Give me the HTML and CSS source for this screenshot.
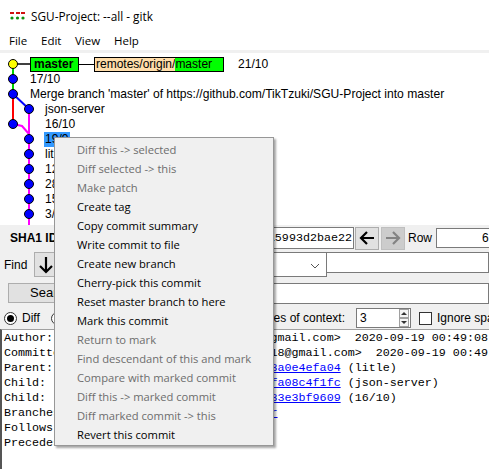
FILE: index.html
```html
<!DOCTYPE html>
<html>
<head>
<meta charset="utf-8">
<title>gitk</title>
<link rel="stylesheet" href="styles.css">
</head>
<body>
<div class="win">
  <div class="titlebar">
    <svg class="appicon" width="16" height="9" viewBox="0 0 16 9">
      <rect x="0" y="0" width="4" height="2" fill="#d01010"/>
      <rect x="6" y="0" width="4" height="2" fill="#d01010"/>
      <rect x="11" y="0" width="4" height="2" fill="#d01010"/>
      <circle cx="2" cy="6" r="1.6" fill="#109010"/>
      <circle cx="7.5" cy="6" r="1.6" fill="#109010"/>
      <circle cx="13" cy="6" r="1.6" fill="#109010"/>
    </svg>
    <span class="title">SGU-Project: --all - gitk</span>
  </div>
  <div class="menubar">
    <span class="mi mi-file">File</span>
    <span class="mi mi-edit">Edit</span>
    <span class="mi mi-view">View</span>
    <span class="mi">Help</span>
  </div>
  <div class="sep"></div>

  <div class="graph">
    <svg class="lines" width="60" height="172" viewBox="0 0 60 172">
      <line x1="13" y1="11" x2="30" y2="11" stroke="#000" stroke-width="1.5"/>
      <line x1="13" y1="11" x2="13" y2="41" stroke="#00d000" stroke-width="2"/>
      <line x1="13" y1="41" x2="13" y2="71" stroke="#ff0000" stroke-width="2"/>
      <line x1="13" y1="41" x2="29" y2="56" stroke="#0000ff" stroke-width="2"/>
      <line x1="29" y1="56" x2="29" y2="172" stroke="#ff00ff" stroke-width="2"/>
      <polyline points="13,71 22,73 29,81" fill="none" stroke="#ff00ff" stroke-width="2"/>
      <circle cx="13" cy="11" r="4.5" fill="#ffff00" stroke="#000" stroke-width="1"/>
      <circle cx="13" cy="26" r="4.5" fill="#0000ff" stroke="#000" stroke-width="1"/>
      <circle cx="13" cy="41" r="4.5" fill="#0000ff" stroke="#000" stroke-width="1"/>
      <circle cx="29" cy="56" r="4.5" fill="#0000ff" stroke="#000" stroke-width="1"/>
      <circle cx="13" cy="71" r="4.5" fill="#0000ff" stroke="#000" stroke-width="1"/>
      <circle cx="29" cy="86" r="4.5" fill="#0000ff" stroke="#000" stroke-width="1"/>
      <circle cx="29" cy="101" r="4.5" fill="#0000ff" stroke="#000" stroke-width="1"/>
      <circle cx="29" cy="116" r="4.5" fill="#0000ff" stroke="#000" stroke-width="1"/>
      <circle cx="29" cy="131" r="4.5" fill="#0000ff" stroke="#000" stroke-width="1"/>
      <circle cx="29" cy="146" r="4.5" fill="#0000ff" stroke="#000" stroke-width="1"/>
      <circle cx="29" cy="161" r="4.5" fill="#0000ff" stroke="#000" stroke-width="1"/>
    </svg>
    <div class="row ind0">
      <span class="ref ref-local">master</span><span class="conn"></span><span class="ref ref-remote"><span class="rp">remotes/origin/</span><span class="rh">master</span></span><span class="after-ref">21/10</span>
    </div>
    <div class="row ind0">17/10</div>
    <div class="row ind0">Merge branch 'master' of https://github.com/TikTzuki/SGU-Project into master</div>
    <div class="row ind1">json-server</div>
    <div class="row ind1">16/10</div>
    <div class="row ind1"><span class="sel">19/9</span></div>
    <div class="row ind1">litle</div>
    <div class="row ind1">12/9</div>
    <div class="row ind1">28/8</div>
    <div class="row ind1">15/8</div>
    <div class="row ind1">3/8</div>
  </div>

  <div class="lower">
    <div class="sha-row">
      <span class="sha-label">SHA1 ID:</span>
      <span class="sha-entry"><span>a7c41e2f0b9d83e6f1c0524d7be8a5993d2bae22</span></span>
      <span class="abtn">
        <svg width="22" height="20" viewBox="0 0 22 20"><path d="M5 10 H18 M11 4 L5 10 L11 16" fill="none" stroke="#000" stroke-width="2.2"/></svg>
      </span>
      <span class="abtn abtn-dis">
        <svg width="22" height="20" viewBox="0 0 22 20"><path d="M4 10 H17 M11 4 L17 10 L11 16" fill="none" stroke="#838383" stroke-width="2.2"/></svg>
      </span>
      <span class="row-label">Row</span>
      <span class="row-entry">6</span>
    </div>

    <div class="find-row">
      <div class="find-left">
        <span class="find-label">Find</span>
        <span class="fbtn">
          <svg width="22" height="22" viewBox="0 0 22 22"><path d="M11 3 V18 M5 12 L11 18 L17 12" fill="none" stroke="#000" stroke-width="2.2"/></svg>
        </span>
        <span class="fbtn">
          <svg width="22" height="22" viewBox="0 0 22 22"><path d="M11 19 V4 M5 10 L11 4 L17 10" fill="none" stroke="#000" stroke-width="2.2"/></svg>
        </span>
        <span class="find-commit">commit</span>
        <span class="combo">containing:
          <svg class="chev" width="10" height="6" viewBox="0 0 10 6"><path d="M1 1 L5 5 L9 1" fill="none" stroke="#555" stroke-width="1"/></svg>
        </span>
      </div>
      <span class="find-entry"></span>
    </div>

    <div class="search-row">
      <span class="sbtn">Search</span>
      <span class="search-entry"></span>
    </div>

    <div class="opts-row">
      <div class="opts-left">
        <div class="radios">
          <span class="radio on"></span><span class="rlabel">Diff</span>
          <span class="radio"></span><span class="rlabel">Old version</span>
          <span class="radio"></span><span class="rlabel">New version</span>
        </div>
        <span class="ctx-label">Lines of context:</span>
      </div>
      <span class="spin"><span class="spin-val">3</span><span class="spin-arrows"><span class="sa sa-up"></span><span class="sa sa-down"></span></span></span>
      <span class="check"></span>
      <span class="clabel">Ignore space change</span>
    </div>

    <div class="textarea">
      <div class="tl">Author: TikTzuki &lt;tiktzuki.nguyen2018@gmail.com&gt;  2020-09-19 00:49:08</div>
      <div class="tl">Committer: TikTzuki &lt;tiktzuki.nguyen2018@gmail.com&gt;  2020-09-19 00:49:08</div>
      <div class="tl">Parent: <span class="lnk">e1f93b07c2d54a6e98b1c07d4f52a63a0e4efa04</span> (litle)</div>
      <div class="tl">Child:  <span class="lnk">b4c8e2d1a07f36c95e2b8d40a1c73ffa08c4f1fc</span> (json-server)</div>
      <div class="tl">Child:  <span class="lnk">7d2e91c4b0a85f3e6c17d9b2e04a5d33e3bf9609</span> (16/10)</div>
      <div class="tl">Branches: <span class="lnk">master</span>, <span class="lnk">remotes/origin/master</span></div>
      <div class="tl">Follows: </div>
      <div class="tl">Precedes: </div>
    </div>
  </div>

  <div class="ctxmenu">
    <div class="it dis">Diff this -&gt; selected</div>
    <div class="it dis">Diff selected -&gt; this</div>
    <div class="it dis">Make patch</div>
    <div class="it">Create tag</div>
    <div class="it">Copy commit summary</div>
    <div class="it">Write commit to file</div>
    <div class="it">Create new branch</div>
    <div class="it">Cherry-pick this commit</div>
    <div class="it">Reset master branch to here</div>
    <div class="it">Mark this commit</div>
    <div class="it dis">Return to mark</div>
    <div class="it dis">Find descendant of this and mark</div>
    <div class="it dis">Compare with marked commit</div>
    <div class="it dis">Diff this -&gt; marked commit</div>
    <div class="it dis">Diff marked commit -&gt; this</div>
    <div class="it">Revert this commit</div>
  </div>
</div>
</body>
</html>
```

FILE: styles.css
```css
* { box-sizing: border-box; }
html, body { margin: 0; padding: 0; }
body {
  width: 489px;
  height: 469px;
  overflow: hidden;
  background: #f0f0f0;
  font-family: "Liberation Sans", Arial, sans-serif;
  font-size: 12px;
  color: #000;
}
.win { position: relative; width: 489px; height: 469px; overflow: hidden; }

/* title bar */
.titlebar {
  height: 31px;
  background: #fff;
  display: flex;
  align-items: center;
  padding-left: 10px;
}
.appicon { display: block; margin-top: 1px; }
.title {
  margin-left: 5px;
  font-family: "Open Sans", sans-serif;
  font-size: 11.8px;
}

/* menu bar */
.menubar {
  height: 19px;
  background: #fff;
  display: flex;
  align-items: center;
  padding-left: 9px;
  font-family: "Open Sans", sans-serif;
  font-size: 11.5px;
}
.mi { display: inline-block; }
.mi-file { width: 32px; }
.mi-edit { width: 34px; }
.mi-view { width: 39px; }
.sep { height: 3px; background: #f0f0f0; }

/* graph pane */
.graph {
  position: relative;
  height: 172px;
  background: #fff;
  padding-top: 4px;
  overflow: hidden;
}
.lines { position: absolute; left: 0; top: 0; }
.row {
  position: relative;
  height: 15px;
  line-height: 15px;
  white-space: nowrap;
  display: flex;
  align-items: center;
  font-size: 12.1px;
}
.ind0 { padding-left: 30px; }
.ind1 { padding-left: 45px; }
.ref {
  display: inline-flex;
  align-items: center;
  height: 15px;
  border: 1px solid #000;
  line-height: 13px;
  flex-shrink: 0;
  font-size: 12px;
}
.ref-local {
  width: 49px;
  background: #00ff00;
  font-weight: bold;
  padding-left: 3px;
}
.conn { display: inline-block; width: 15px; height: 1.5px; background: #000; flex-shrink: 0; }
.ref-remote { width: 130px; }
.rp { background: #ffddaa; height: 13px; padding-left: 1px; }
.rh { background: #00ff00; height: 13px; flex: 1; }
.after-ref { margin-left: 14px; }
.sel { background: #3399ff; padding: 0 1px; margin-left: -1px; }

/* lower pane */
.lower { height: 244px; background: #f0f0f0; }
.sha-row {
  height: 26px;
  display: flex;
  align-items: center;
  padding-left: 10px;
}
.sha-row > * { flex-shrink: 0; }
.sha-label { width: 60px; font-weight: bold; }
.sha-entry {
  width: 284px;
  height: 22px;
  background: #fff;
  border: 1px solid #7a7a7a;
  font-family: "Liberation Mono", "Courier New", monospace;
  font-size: 11.7px;
  line-height: 20px;
  display: flex;
  justify-content: flex-end;
  padding-right: 1px;
  overflow: hidden;
  white-space: nowrap;
}
.sha-entry > span { flex-shrink: 0; }
.abtn {
  width: 24px;
  height: 23px;
  margin-left: 1px;
  background: #e1e1e1;
  border: 1px solid #adadad;
  display: flex;
  align-items: center;
  justify-content: center;
}
.abtn-dis { margin-left: 2px; background: #cccccc; border-color: #bfbfbf; }
.row-label { margin-left: 3px; width: 28px; }
.row-entry {
  width: 60px;
  height: 20px;
  background: #fff;
  border: 1px solid #7a7a7a;
  padding-left: 45px;
  line-height: 18px;
}

.find-row {
  margin-top: 1px;
  height: 25px;
  display: flex;
  align-items: center;
}
.find-left {
  width: 327px;
  flex-shrink: 0;
  height: 25px;
  display: flex;
  align-items: center;
  padding-left: 4px;
}
.find-left > * { flex-shrink: 0; }
.find-label { width: 30px; }
.fbtn {
  width: 24px;
  height: 25px;
  background: #e1e1e1;
  border: 1px solid #adadad;
  display: flex;
  align-items: center;
  justify-content: center;
  margin-right: 2px;
}
.find-commit { margin-left: 6px; }
.combo {
  margin-left: auto;
  width: 160px;
  height: 25px;
  background: #fff;
  border: 1px solid #7a7a7a;
  display: flex;
  align-items: center;
  padding-left: 4px;
  position: relative;
}
.chev { position: absolute; right: 6px; top: 10px; }
.find-entry {
  flex: 1;
  height: 21px;
  margin-top: -4px;
  background: #fff;
  border: 1px solid #7a7a7a;
  border-left: none;
}

.search-row {
  margin-top: 6px;
  height: 20px;
  display: flex;
}
.sbtn {
  flex-shrink: 0;
  margin-left: 8px;
  width: 80px;
  height: 20px;
  background: #e1e1e1;
  border: 1px solid #adadad;
  line-height: 18px;
  font-size: 13px;
  padding-left: 21px;
}
.search-entry {
  flex: 1;
  margin-left: 4px;
  height: 21px;
  background: #fff;
  border: 1px solid #7a7a7a;
}

.opts-row {
  margin-top: 4px;
  height: 22px;
  display: flex;
  align-items: center;
  white-space: nowrap;
}
.opts-row > * { flex-shrink: 0; }
.opts-left {
  width: 345px;
  display: flex;
  align-items: center;
  justify-content: space-between;
  padding-left: 4px;
}
.radios { display: flex; align-items: center; }
.radio {
  width: 13px;
  height: 13px;
  border: 1px solid #333;
  border-radius: 50%;
  background: #fff;
  position: relative;
}
.radio.on::after {
  content: "";
  position: absolute;
  left: 2px; top: 2px;
  width: 7px; height: 7px;
  border-radius: 50%;
  background: #000;
}
.rlabel { margin-left: 5px; margin-right: 11px; }
.spin {
  margin-left: 11px;
  width: 55px;
  height: 20px;
  background: #fff;
  border: 1px solid #7a7a7a;
  display: flex;
  align-items: center;
  justify-content: space-between;
  padding-left: 3px;
}
.spin-arrows {
  width: 10px;
  height: 18px;
  display: flex;
  flex-direction: column;
  margin-right: 1px;
}
.sa {
  flex: 1;
  border: 1px solid #a0a0a0;
  background: #f4f4f4;
  position: relative;
}
.sa-up::after, .sa-down::after {
  content: "";
  position: absolute;
  left: 1px;
  border-left: 3px solid transparent;
  border-right: 3px solid transparent;
}
.sa-up::after { top: 2px; border-bottom: 3px solid #333; }
.sa-down::after { top: 2px; border-top: 3px solid #333; }
.check {
  margin-left: 8px;
  width: 13px;
  height: 13px;
  border: 1px solid #333;
  background: #fff;
}
.clabel { margin-left: 5px; }

.textarea {
  height: 140px;
  background: #fff;
  border-top: 1px solid #a0a0a0;
  border-left: 2px solid #555;
  padding-left: 2px;
  padding-top: 1px;
  font-family: "Liberation Mono", "Courier New", monospace;
  font-size: 11.7px;
  line-height: 15px;
  overflow: hidden;
}
.tl { height: 15px; white-space: pre; }
.lnk { color: #0000ff; text-decoration: underline; }

/* context menu */
.ctxmenu {
  position: absolute;
  left: 54px;
  top: 137px;
  width: 220px;
  height: 309px;
  background: #f0f0f0;
  border: 1px solid #979797;
  box-shadow: 2px 2px 2px rgba(0, 0, 0, 0.35);
  padding-top: 2px;
  font-family: "Open Sans", sans-serif;
  font-size: 11.2px;
}
.it {
  height: 19px;
  line-height: 19px;
  padding-left: 22px;
  white-space: nowrap;
}
.it.dis { color: #6d6d6d; }
```
